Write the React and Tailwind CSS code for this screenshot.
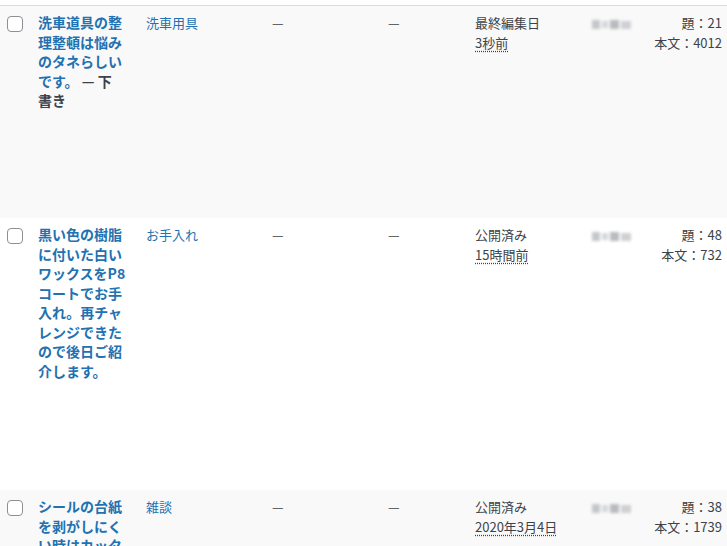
import React from "react";

const font = {
  fontFamily: "'Noto Sans CJK JP', 'Noto Sans', sans-serif",
};

const posts = [
  {
    lines: ["洗車道具の整", "理整頓は悩み", "のタネらしい", "です。"],
    state: ["— 下", "書き"],
    category: "洗車用具",
    status: "最終編集日",
    date: "3秒前",
    title: "題：21",
    body: "本文：4012",
    bg: "bg-[#f9f9f9]",
    height: "h-[212px]",
  },
  {
    lines: [
      "黒い色の樹脂",
      "に付いた白い",
      "ワックスをP8",
      "コートでお手",
      "入れ。再チャ",
      "レンジできた",
      "ので後日ご紹",
      "介します。",
    ],
    category: "お手入れ",
    status: "公開済み",
    date: "15時間前",
    title: "題：48",
    body: "本文：732",
    bg: "bg-white",
    height: "h-[272px]",
  },
  {
    lines: ["シールの台紙", "を剥がしにく", "い時はカッタ", "ーを使うと簡", "単です。"],
    category: "雑談",
    status: "公開済み",
    date: "2020年3月4日",
    title: "題：38",
    body: "本文：1739",
    bg: "bg-[#f9f9f9]",
    height: "h-[212px]",
  },
];

const Blurred = () => (
  <div className="flex h-[11px] items-center gap-[2px] blur-[1.5px]">
    <div className="h-[9px] w-[8px] bg-[#c4c6ca]" />
    <div className="h-[7px] w-[6px] bg-[#d6d7da]" />
    <div className="h-[9px] w-[9px] bg-[#b9bbbf]" />
    <div className="h-[8px] w-[10px] bg-[#cfd0d3]" />
  </div>
);

const Row = ({ post }) => (
  <div className={`flex ${post.bg} ${post.height} text-[13px] leading-[20px] text-[#3c434a]`}>
    <div className="w-[38px] shrink-0 pl-[7px] pt-[10px]">
      <div className="h-[16px] w-[16px] rounded-[4px] border border-[#8c8f94] bg-white" />
    </div>

    <div className="w-[108px] shrink-0 pt-[7px] pr-[18px] text-[14px] font-bold leading-[19.5px] text-[#2271b1]">
      {post.lines.map((line, i) => (
        <div key={i} className="whitespace-nowrap">
          {line}
          {post.state && i === post.lines.length - 1 && (
            <span className="font-semibold text-[#3c434a]"> {post.state[0]}</span>
          )}
        </div>
      ))}
      {post.state && <div className="font-semibold text-[#3c434a]">{post.state[1]}</div>}
    </div>

    <div className="w-[126px] shrink-0 pt-[7px] text-[#2271b1]">{post.category}</div>

    <div className="w-[116px] shrink-0 pt-[7px]">—</div>

    <div className="w-[87px] shrink-0 pt-[7px]">—</div>

    <div className="w-[117px] shrink-0 pt-[7px]">
      <div>{post.status}</div>
      <div>
        <span className="underline decoration-dotted underline-offset-[3px]">{post.date}</span>
      </div>
    </div>

    <div className="w-[50px] shrink-0 pt-[13px]">
      <Blurred />
    </div>

    <div className="flex-1 whitespace-nowrap pt-[7px] pr-[5px] text-right">
      <div>{post.title}</div>
      <div>{post.body}</div>
    </div>
  </div>
);

export default function App() {
  return (
    <div className="h-[546px] w-[727px] overflow-hidden bg-white" style={font}>
      <div className="h-[5px] bg-white" />
      <div className="border-t border-[#dcdcde]">
        {posts.map((post, i) => (
          <Row key={i} post={post} />
        ))}
      </div>
    </div>
  );
}
